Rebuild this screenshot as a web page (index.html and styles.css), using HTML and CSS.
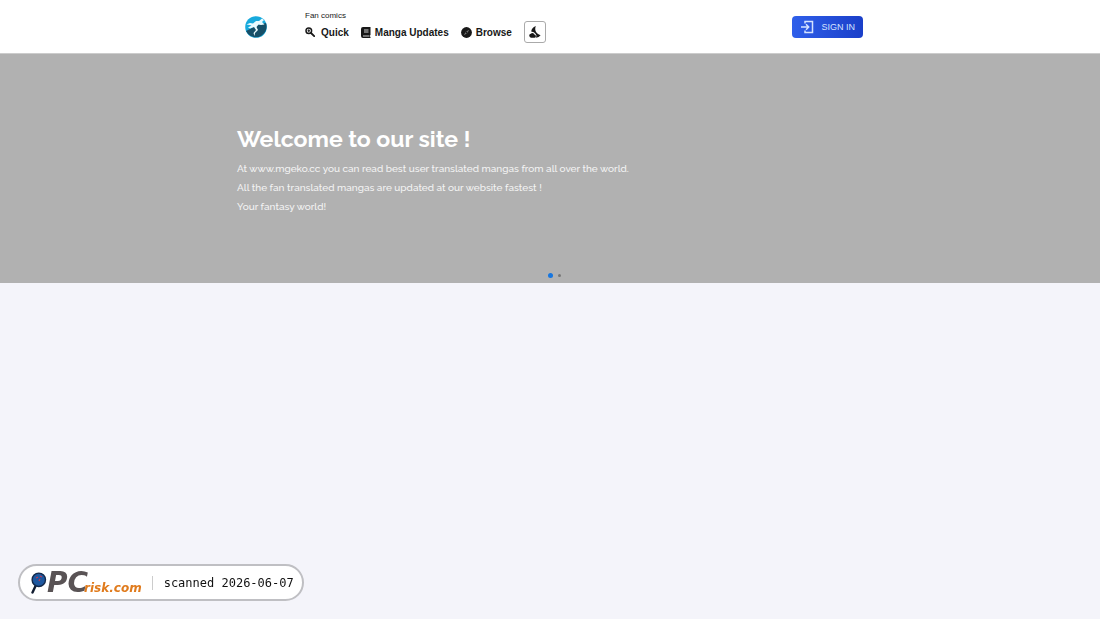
FILE: index.html
```html
<!DOCTYPE html>
<html lang="en">
<head>
  <meta charset="UTF-8" />
  <meta name="viewport" content="width=device-width, initial-scale=1.0"/>
  <title>Fan comics</title>
  <link rel="stylesheet" href="styles.css">
</head>
<body>

  <header class="site-header">
    <div class="container header-row">
      <a href="#" class="logo" aria-label="Home">
        <svg width="22" height="22" viewBox="0 0 22 22">
          <circle cx="11" cy="11" r="10.8" fill="#18aadd"/>
          <path d="M1 15 7 12 12 9 21 7A10.8 10.8 0 0 1 3 18Z" fill="#164f68"/>
          <path d="M1.5 8.5 5 7 8 7.5 11 5 14 5 17 2.5 19 4 17 6 19.5 8.5 16 9 13.5 8.5 11.5 11 13 14 10 17 9.5 20 8.5 17 11 14 9 11 5 12.5 3 11.5 6.5 9.5 4.5 9Z" fill="#e9fbff"/>
        </svg>
      </a>
      <div class="header-main">
        <p class="tagline">Fan comics</p>
        <nav class="nav">
          <a href="#" class="nav-link nav-quick">
            <svg width="10" height="10" viewBox="0 0 10 10">
              <circle cx="3.8" cy="3.8" r="2.8" fill="none" stroke="#181818" stroke-width="1.5"/>
              <path d="M6 6 9.2 9.2" stroke="#181818" stroke-width="1.8" stroke-linecap="round"/>
              <path d="M3.8 2.3V5.3M2.5 3.8H5" stroke="#181818" stroke-width="1.1"/>
            </svg>
            Quick
          </a>
          <a href="#" class="nav-link">
            <svg width="10" height="11" viewBox="0 0 10 11">
              <path d="M2 0H9.5V8.2H9V9.8H9.5V11H2A2 2 0 0 1 0 9V2A2 2 0 0 1 2 0Z" fill="#181818"/>
              <path d="M3 3H7.5M3 5H7.5M2 9H8.5" stroke="#fff" stroke-width=".8"/>
            </svg>
            Manga Updates
          </a>
          <a href="#" class="nav-link">
            <svg width="11" height="11" viewBox="0 0 11 11">
              <circle cx="5.5" cy="5.5" r="5.4" fill="#181818"/>
              <path d="M8.2 2.8 6.2 6.2 2.8 8.2 4.8 4.8Z" fill="#777"/>
              <circle cx="5.5" cy="5.5" r=".9" fill="#181818"/>
            </svg>
            Browse
          </a>
          <button type="button" class="theme-btn" aria-label="Dark mode">
            <svg width="12" height="12" viewBox="0 0 12 12" fill="#181818">
              <path d="M6.8 0Q5 4.4 8.4 7.6 9.8 8.8 11.6 9.2 10 11.6 7 11.8 8.2 9.4 6.4 7.8 5.4 5.8 2.2 5.6 2.6 1.6 6.8 0Z"/>
              <path d="M.2 9.6A2 2 0 0 1 1.8 7.8 2.2 2.2 0 0 1 5.6 8.8 1.5 1.5 0 0 1 5.2 11.8H2Q.4 11.4 .2 9.6Z"/>
            </svg>
          </button>
        </nav>
      </div>
      <a href="#" class="signin">
        <svg width="14" height="14" viewBox="0 0 14 14" fill="none" stroke="#d5e3ff" stroke-width="1.5">
          <path d="M5 3.5V1.5H12.5V12.5H5V10.5M1 7H8.5M6 4.3 8.7 7 6 9.7"/>
        </svg>
        SIGN IN
      </a>
    </div>
  </header>

  <main>
    <section class="hero">
      <div class="container">
        <h1>Welcome to our site !</h1>
        <p>At www.mgeko.cc you can read best user translated mangas from all over the world.</p>
        <p>All the fan translated mangas are updated at our website fastest !</p>
        <p>Your fantasy world!</p>
      </div>
      <div class="dots">
        <button type="button" class="dot dot-active" aria-label="Slide 1"></button>
        <button type="button" class="dot" aria-label="Slide 2"></button>
      </div>
    </section>
  </main>

  <!-- Scan badge -->
  <div class="badge">
    <svg width="16" height="22" viewBox="0 0 16 22">
      <path d="M5 13 1.5 20.5" stroke="#111c30" stroke-width="2.4" stroke-linecap="round"/>
      <circle cx="7.8" cy="7.8" r="6.7" fill="#1d579f" stroke="#13294b" stroke-width="1.4"/>
      <path d="M5 6 7 5M9 4 11 5M9 7 8 9" stroke="#c23a55" stroke-width="1.2"/>
    </svg>
    <span class="brand"><span class="brand-pc">PC</span><span class="brand-risk">risk.com</span></span>
    <span class="badge-date">scanned 2026-06-07</span>
  </div>

</body>
</html>
```
FILE: styles.css
```css
* {
  margin: 0;
  padding: 0;
  box-sizing: border-box;
}

body {
  background-color: #f4f4fa;
  color: #181818;
  font-family: "Liberation Sans", Arial, sans-serif;
}

a {
  color: inherit;
  text-decoration: none;
}

svg {
  display: block;
  flex-shrink: 0;
}

.container {
  width: 100%;
  max-width: 626px;
  margin: 0 auto;
}

.site-header {
  background-color: #fff;
  border-bottom: 1px solid #ccc;
}

.header-row {
  display: flex;
  align-items: center;
  height: 53px;
}

.logo {
  padding: 0 38px 0 8px;
}

.header-main {
  padding-top: 1px;
}

.tagline {
  font-size: 8px;
  line-height: 10px;
}

.nav {
  display: flex;
  align-items: center;
  gap: 12px;
}

.nav-link {
  display: flex;
  align-items: center;
  gap: 4px;
  font-size: 10px;
  font-weight: bold;
  white-space: nowrap;
}

.nav-quick {
  gap: 6px;
}

.theme-btn {
  display: flex;
  align-items: center;
  justify-content: center;
  width: 22px;
  height: 22px;
  background-color: #fff;
  border: 1px solid #aaa;
  border-radius: 3px;
  cursor: pointer;
}

.signin {
  display: flex;
  align-items: center;
  gap: 7px;
  height: 22px;
  margin-left: auto;
  padding: 0 8px;
  background: linear-gradient(to right, #2f5fea, #1a3fc9);
  border-radius: 4px;
  color: #d5e3ff;
  font-size: 9px;
}

.hero {
  display: flex;
  flex-direction: column;
  height: 229px;
  padding: 70px 0 5px;
  background-color: #b1b1b1;
  color: #fff;
  font-family: Raleway, Lato, sans-serif;
}

.hero h1 {
  margin-bottom: 5px;
  font-size: 23px;
  font-weight: bold;
  line-height: 30px;
}

.hero p {
  color: #f4f4f4;
  font-size: 10px;
  font-weight: 500;
  line-height: 19px;
}

.dots {
  display: flex;
  align-items: center;
  justify-content: center;
  gap: 5px;
  margin-top: auto;
  padding-left: 8px;
}

.dot {
  width: 3px;
  height: 3px;
  background-color: #777;
  border: none;
  border-radius: 50%;
}

.dot-active {
  width: 5px;
  height: 5px;
  background-color: #1676e0;
}

.badge {
  position: fixed;
  left: 18px;
  bottom: 18px;
  display: flex;
  align-items: center;
  height: 37px;
  padding: 0 8px 0 11px;
  background-color: #fff;
  border: 2px solid #bfbfc3;
  border-radius: 19px;
}

.brand {
  display: flex;
  align-items: baseline;
  font-family: "DejaVu Sans", sans-serif;
  font-style: italic;
  font-weight: bold;
}

.brand-pc {
  color: #595355;
  font-size: 28px;
  line-height: 30px;
}

.brand-risk {
  margin-left: -4px;
  color: #e07b1d;
  font-size: 12px;
}

.badge-date {
  margin-left: 10px;
  padding-left: 11px;
  border-left: 1px solid #ccc;
  color: #111;
  font-family: "DejaVu Sans Mono", monospace;
  font-size: 12px;
}
```
